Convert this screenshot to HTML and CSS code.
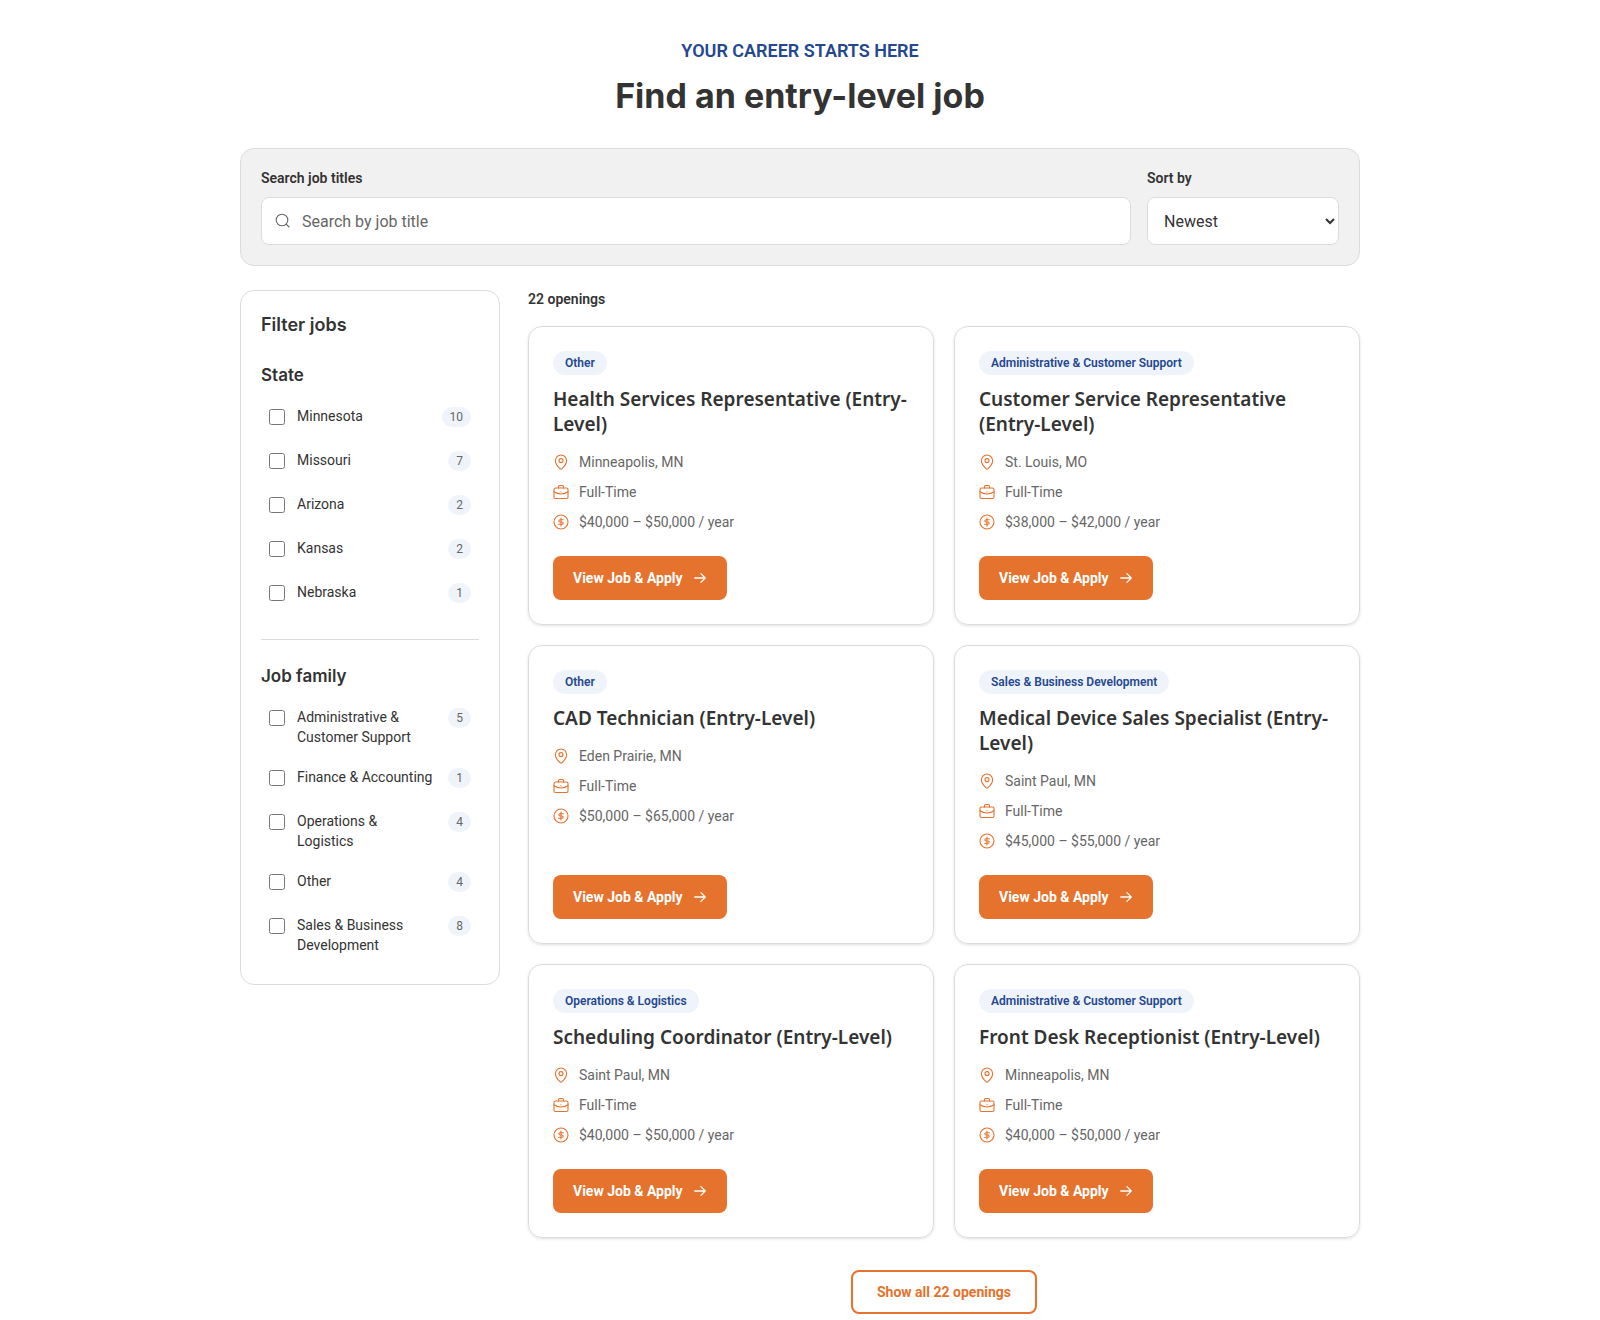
FILE: index.html
```
<!DOCTYPE html>
<html lang="en">

<head>
    <meta charset="UTF-8" />
    <meta name="viewport" content="width=device-width, initial-scale=1" />
    <title>Find an entry-level job</title>
    <link rel="stylesheet" href="styles.css">
</head>

<body>

    <svg class="sprite" aria-hidden="true">
        <symbol id="icon-search" viewBox="0 0 16 16">
            <circle cx="7" cy="7" r="5.8" />
            <path d="M11.2 11.2 14 14" />
        </symbol>
        <symbol id="icon-pin" viewBox="0 0 16 16">
            <circle cx="8" cy="6.6" r="2" />
            <path d="M13.6 6.8c0 3.4-2.5 6-4.6 7.9a1.5 1.5 0 0 1-2 0C4.900 12.800 2.400 10.200 2.400 6.800a5.600 5.800 0 0 1 11.200 0Z" />
        </symbol>
        <symbol id="icon-briefcase" viewBox="0 0 16 16">
            <rect x="1" y="4" width="14" height="10.500" rx="1.500" />
            <path d="M5.500 4V2.500a1 1 0 0 1 1-1h3a1 1 0 0 1 1 1V4" />
            <path d="M1 7.800c2 1.500 4.500 2.200 7 2.200s5-.7 7-2.200" />
            <path d="M7.900 7.800h.2" />
        </symbol>
        <symbol id="icon-dollar" viewBox="0 0 16 16">
            <circle cx="8" cy="8" r="7" />
            <path d="M8 4v8" />
            <path d="M10.400 5.700H7a1.150 1.150 0 0 0 0 2.300h2a1.150 1.150 0 0 1 0 2.300H5.600" />
        </symbol>
        <symbol id="icon-arrow" viewBox="0 0 16 16">
            <path d="M2 8h12M9 3l5 5-5 5" />
        </symbol>
    </svg>

    <main class="page">

        <header class="page-header">
            <p class="eyebrow">Your career starts here</p>
            <h1>Find an entry-level job</h1>
        </header>

        <form class="toolbar">
            <div class="field">
                <label for="search">Search job titles</label>
                <div class="search-box">
                    <svg class="icon"><use href="#icon-search" /></svg>
                    <input type="search" id="search" placeholder="Search by job title" />
                </div>
            </div>
            <div class="field">
                <label for="sort">Sort by</label>
                <select id="sort">
                    <option>Newest</option>
                    <option>Oldest</option>
                </select>
            </div>
        </form>

        <div class="layout">

            <aside class="filters">
                <h2>Filter jobs</h2>

                <section class="filter-group">
                    <h3>State</h3>
                    <label class="option"><input type="checkbox" /><span class="name">Minnesota</span><span class="count">10</span></label>
                    <label class="option"><input type="checkbox" /><span class="name">Missouri</span><span class="count">7</span></label>
                    <label class="option"><input type="checkbox" /><span class="name">Arizona</span><span class="count">2</span></label>
                    <label class="option"><input type="checkbox" /><span class="name">Kansas</span><span class="count">2</span></label>
                    <label class="option"><input type="checkbox" /><span class="name">Nebraska</span><span class="count">1</span></label>
                </section>

                <section class="filter-group">
                    <h3>Job family</h3>
                    <label class="option"><input type="checkbox" /><span class="name">Administrative &amp; Customer Support</span><span class="count">5</span></label>
                    <label class="option"><input type="checkbox" /><span class="name">Finance &amp; Accounting</span><span class="count">1</span></label>
                    <label class="option"><input type="checkbox" /><span class="name">Operations &amp; Logistics</span><span class="count">4</span></label>
                    <label class="option"><input type="checkbox" /><span class="name">Other</span><span class="count">4</span></label>
                    <label class="option"><input type="checkbox" /><span class="name">Sales &amp; Business Development</span><span class="count">8</span></label>
                </section>
            </aside>

            <section class="results">
                <p class="total">22 openings</p>

                <div class="cards">
                    <article class="card">
                        <span class="tag">Other</span>
                        <h2>Health Services Representative (Entry-Level)</h2>
                        <ul>
                            <li><svg class="icon"><use href="#icon-pin" /></svg>Minneapolis, MN</li>
                            <li><svg class="icon"><use href="#icon-briefcase" /></svg>Full-Time</li>
                            <li><svg class="icon"><use href="#icon-dollar" /></svg>$40,000 – $50,000 / year</li>
                        </ul>
                        <a class="apply" href="#">View Job &amp; Apply <svg class="icon"><use href="#icon-arrow" /></svg></a>
                    </article>

                    <article class="card">
                        <span class="tag">Administrative &amp; Customer Support</span>
                        <h2>Customer Service Representative (Entry-Level)</h2>
                        <ul>
                            <li><svg class="icon"><use href="#icon-pin" /></svg>St. Louis, MO</li>
                            <li><svg class="icon"><use href="#icon-briefcase" /></svg>Full-Time</li>
                            <li><svg class="icon"><use href="#icon-dollar" /></svg>$38,000 – $42,000 / year</li>
                        </ul>
                        <a class="apply" href="#">View Job &amp; Apply <svg class="icon"><use href="#icon-arrow" /></svg></a>
                    </article>

                    <article class="card">
                        <span class="tag">Other</span>
                        <h2>CAD Technician (Entry-Level)</h2>
                        <ul>
                            <li><svg class="icon"><use href="#icon-pin" /></svg>Eden Prairie, MN</li>
                            <li><svg class="icon"><use href="#icon-briefcase" /></svg>Full-Time</li>
                            <li><svg class="icon"><use href="#icon-dollar" /></svg>$50,000 – $65,000 / year</li>
                        </ul>
                        <a class="apply" href="#">View Job &amp; Apply <svg class="icon"><use href="#icon-arrow" /></svg></a>
                    </article>

                    <article class="card">
                        <span class="tag">Sales &amp; Business Development</span>
                        <h2>Medical Device Sales Specialist (Entry-Level)</h2>
                        <ul>
                            <li><svg class="icon"><use href="#icon-pin" /></svg>Saint Paul, MN</li>
                            <li><svg class="icon"><use href="#icon-briefcase" /></svg>Full-Time</li>
                            <li><svg class="icon"><use href="#icon-dollar" /></svg>$45,000 – $55,000 / year</li>
                        </ul>
                        <a class="apply" href="#">View Job &amp; Apply <svg class="icon"><use href="#icon-arrow" /></svg></a>
                    </article>

                    <article class="card">
                        <span class="tag">Operations &amp; Logistics</span>
                        <h2>Scheduling Coordinator (Entry-Level)</h2>
                        <ul>
                            <li><svg class="icon"><use href="#icon-pin" /></svg>Saint Paul, MN</li>
                            <li><svg class="icon"><use href="#icon-briefcase" /></svg>Full-Time</li>
                            <li><svg class="icon"><use href="#icon-dollar" /></svg>$40,000 – $50,000 / year</li>
                        </ul>
                        <a class="apply" href="#">View Job &amp; Apply <svg class="icon"><use href="#icon-arrow" /></svg></a>
                    </article>

                    <article class="card">
                        <span class="tag">Administrative &amp; Customer Support</span>
                        <h2>Front Desk Receptionist (Entry-Level)</h2>
                        <ul>
                            <li><svg class="icon"><use href="#icon-pin" /></svg>Minneapolis, MN</li>
                            <li><svg class="icon"><use href="#icon-briefcase" /></svg>Full-Time</li>
                            <li><svg class="icon"><use href="#icon-dollar" /></svg>$40,000 – $50,000 / year</li>
                        </ul>
                        <a class="apply" href="#">View Job &amp; Apply <svg class="icon"><use href="#icon-arrow" /></svg></a>
                    </article>
                </div>

                <button class="show-all" type="button">Show all 22 openings</button>
            </section>

        </div>
    </main>

</body>

</html>
```
FILE: styles.css
```
* {
    box-sizing: border-box;
}

body {
    margin: 0;
    background: #fff;
    color: #333;
    font-family: Roboto, sans-serif;
    font-size: 14px;
    line-height: 20px;
}

h1,
h2,
h3,
p,
ul {
    margin: 0;
    padding: 0;
}

h1,
h2,
h3 {
    font-family: Inter, sans-serif;
}

.sprite {
    display: none;
}

.icon {
    width: 16px;
    height: 16px;
    flex: none;
    fill: none;
    stroke: currentColor;
    stroke-width: 1.1;
    stroke-linecap: round;
    stroke-linejoin: round;
}

.page {
    max-width: 1168px;
    margin: 0 auto;
    padding: 40px 24px 0;
}

.page-header {
    text-align: center;
    margin-bottom: 30px;
}

.eyebrow {
    color: #24478f;
    font-size: 18px;
    line-height: 22px;
    font-weight: 600;
    text-transform: uppercase;
    margin-bottom: 12px;
}

h1 {
    font-size: 34px;
    line-height: 44px;
    font-weight: 700;
}

.toolbar {
    display: grid;
    grid-template-columns: 1fr 192px;
    gap: 16px;
    padding: 20px;
    margin-bottom: 24px;
    background: #f1f1f1;
    border: 1px solid #dcdcdc;
    border-radius: 14px;
}

.field label {
    display: block;
    margin-bottom: 10px;
    line-height: 18px;
    font-weight: 600;
}

.search-box {
    position: relative;
}

.search-box .icon {
    position: absolute;
    top: 16px;
    left: 14px;
    color: #666;
}

.field input,
.field select {
    display: block;
    width: 100%;
    height: 48px;
    margin: 0;
    background: #fff;
    border: 1px solid #dcdcdc;
    border-radius: 8px;
    color: #333;
    font-family: inherit;
    font-size: 16px;
}

.field input {
    padding: 0 16px 0 40px;
    appearance: none;
}

.field input::placeholder {
    color: #666;
}

.field select {
    padding: 0 0 0 12px;
}

.layout {
    display: grid;
    grid-template-columns: 260px 1fr;
    gap: 28px;
    align-items: start;
}

.filters {
    padding: 20px;
    border: 1px solid #dcdcdc;
    border-radius: 14px;
}

.filters h2 {
    margin-bottom: 24px;
    font-size: 18px;
    line-height: 28px;
    font-weight: 600;
}

.filters h3 {
    margin-bottom: 8px;
    font-size: 17px;
    line-height: 24px;
    font-weight: 600;
}

.filter-group + .filter-group {
    margin-top: 24px;
    padding-top: 24px;
    border-top: 1px solid #dcdcdc;
}

.option {
    display: flex;
    align-items: flex-start;
    gap: 12px;
    min-height: 44px;
    padding: 11px 8px 9px;
}

.option input {
    width: 16px;
    height: 16px;
    margin: 3px 0 0;
    flex: none;
}

.option .name {
    flex: 1;
}

.count {
    margin-top: 1px;
    padding: 0 8px;
    background: #eff4fa;
    border-radius: 10px;
    color: #666;
    font-size: 12px;
}

.total {
    margin-bottom: 18px;
    line-height: 18px;
    font-weight: 600;
}

.cards {
    display: grid;
    grid-template-columns: 1fr 1fr;
    gap: 20px;
}

.card {
    display: flex;
    flex-direction: column;
    align-items: flex-start;
    padding: 24px;
    border: 1px solid #dcdcdc;
    border-radius: 14px;
    box-shadow: 0 1px 3px rgba(0, 0, 0, 0.12);
}

.tag {
    padding: 2px 12px;
    background: #eff4fa;
    border-radius: 12px;
    color: #24478f;
    font-size: 12px;
    font-weight: 600;
}

.card h2 {
    margin: 12px 0 15px;
    font-family: "Noto Sans", sans-serif;
    font-size: 19px;
    line-height: 25px;
    font-weight: 600;
}

.card ul {
    display: grid;
    gap: 10px;
    margin-bottom: 24px;
    list-style: none;
    color: #666;
}

.card li {
    display: flex;
    align-items: center;
    gap: 10px;
}

.card li .icon {
    color: #e5722d;
}

.apply {
    display: flex;
    align-items: center;
    gap: 10px;
    margin-top: auto;
    padding: 12px 20px;
    background: #e5722d;
    border-radius: 8px;
    color: #fff;
    font-weight: 700;
    text-decoration: none;
}

.apply .icon {
    width: 14px;
    height: 14px;
    stroke-width: 1.5;
}

.show-all {
    display: block;
    margin: 32px auto 0;
    padding: 10px 24px;
    background: #fff;
    border: 2px solid #e5722d;
    border-radius: 8px;
    color: #e5722d;
    font-family: inherit;
    font-size: 14px;
    line-height: 20px;
    font-weight: 700;
    cursor: pointer;
}

@media (max-width: 800px) {
    .toolbar,
    .layout,
    .cards {
        grid-template-columns: 1fr;
    }
}
```
